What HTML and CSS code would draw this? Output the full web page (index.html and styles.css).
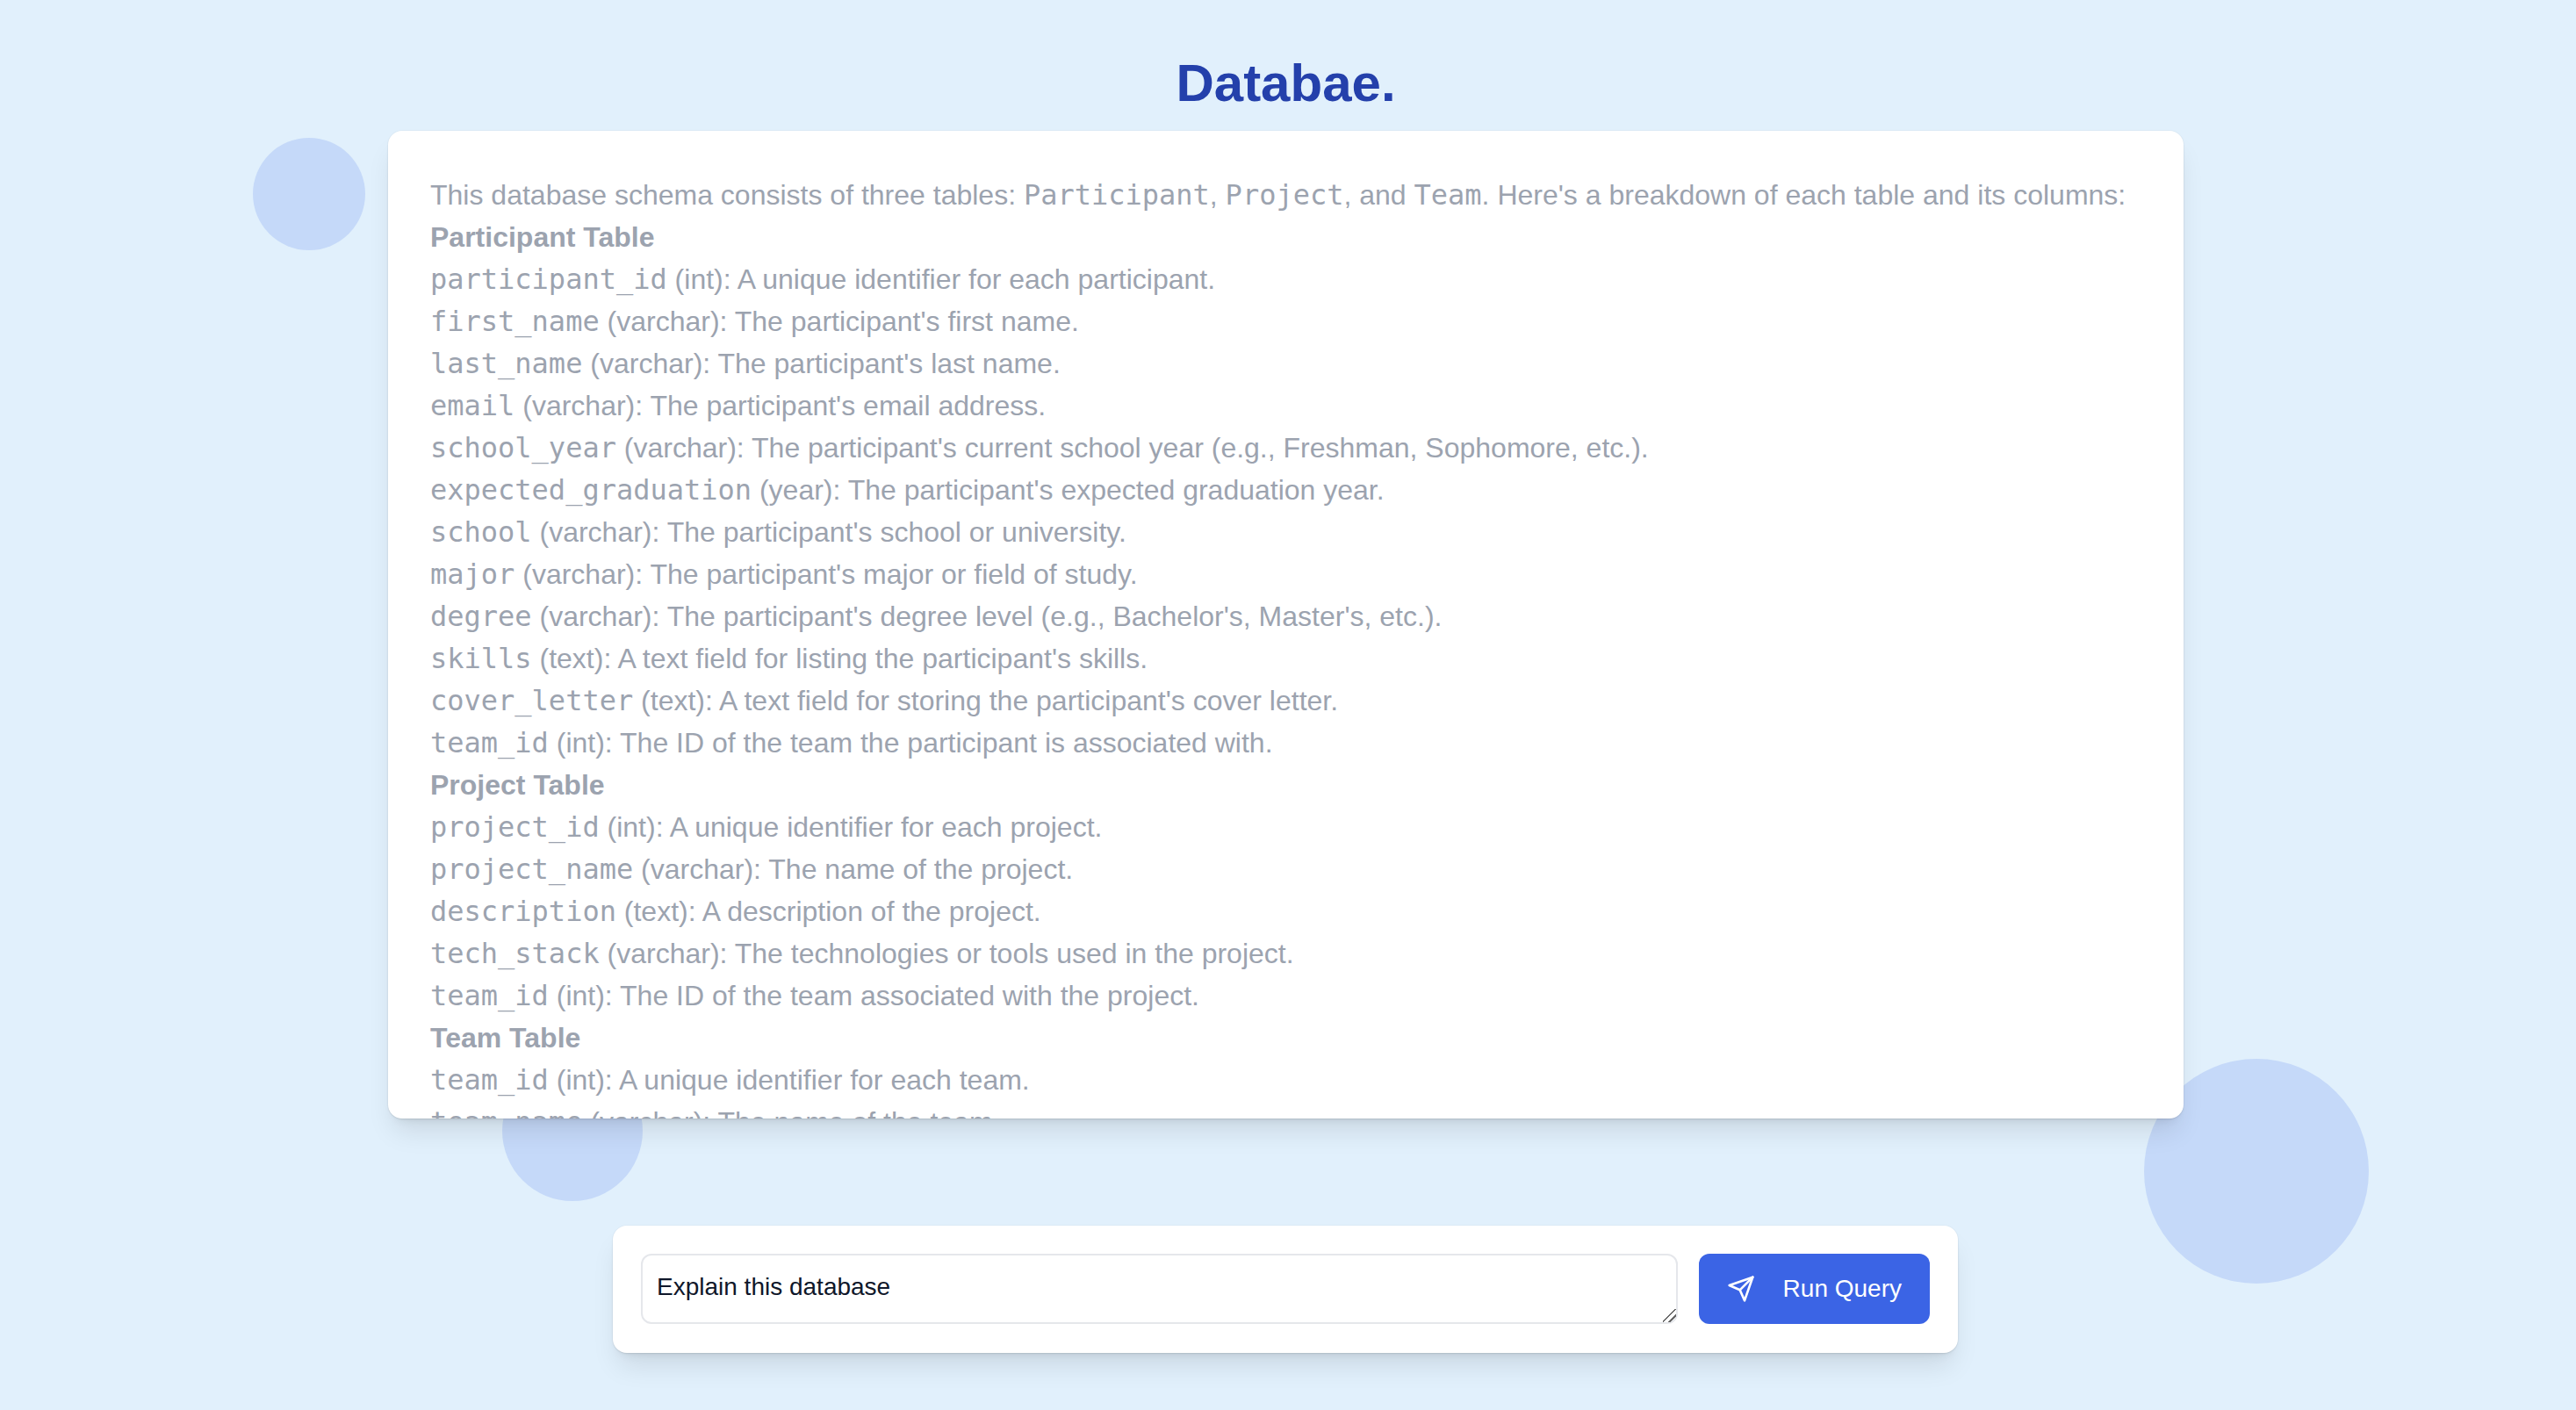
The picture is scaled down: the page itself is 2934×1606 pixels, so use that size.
FILE: index.html
```html
<!DOCTYPE html>
<html lang="en">

<head>
    <meta charset="UTF-8">
    <title>Databae.</title>
    <link rel="stylesheet" href="styles.css">
</head>

<body>
    <div class="circle circle-one"></div>
    <div class="circle circle-two"></div>
    <div class="circle circle-three"></div>

    <h1 class="title">Databae.</h1>

    <div class="answer">
        <p>This database schema consists of three tables: <code>Participant</code>, <code>Project</code>, and <code>Team</code>. Here's a breakdown of each table and its columns:</p>
        <p><strong>Participant Table</strong></p>
        <p><code>participant_id</code> (int): A unique identifier for each participant.</p>
        <p><code>first_name</code> (varchar): The participant's first name.</p>
        <p><code>last_name</code> (varchar): The participant's last name.</p>
        <p><code>email</code> (varchar): The participant's email address.</p>
        <p><code>school_year</code> (varchar): The participant's current school year (e.g., Freshman, Sophomore, etc.).</p>
        <p><code>expected_graduation</code> (year): The participant's expected graduation year.</p>
        <p><code>school</code> (varchar): The participant's school or university.</p>
        <p><code>major</code> (varchar): The participant's major or field of study.</p>
        <p><code>degree</code> (varchar): The participant's degree level (e.g., Bachelor's, Master's, etc.).</p>
        <p><code>skills</code> (text): A text field for listing the participant's skills.</p>
        <p><code>cover_letter</code> (text): A text field for storing the participant's cover letter.</p>
        <p><code>team_id</code> (int): The ID of the team the participant is associated with.</p>
        <p><strong>Project Table</strong></p>
        <p><code>project_id</code> (int): A unique identifier for each project.</p>
        <p><code>project_name</code> (varchar): The name of the project.</p>
        <p><code>description</code> (text): A description of the project.</p>
        <p><code>tech_stack</code> (varchar): The technologies or tools used in the project.</p>
        <p><code>team_id</code> (int): The ID of the team associated with the project.</p>
        <p><strong>Team Table</strong></p>
        <p><code>team_id</code> (int): A unique identifier for each team.</p>
        <p><code>team_name</code> (varchar): The name of the team.</p>
    </div>

    <form class="query-bar">
        <textarea class="query-input">Explain this database</textarea>
        <button class="run-button" type="button">
            <svg class="run-icon" viewBox="0 0 24 24" fill="none" stroke="currentColor" stroke-width="2"
                stroke-linecap="round" stroke-linejoin="round">
                <line x1="22" y1="2" x2="11" y2="13"></line>
                <polygon points="22 2 15 22 11 13 2 9 22 2"></polygon>
            </svg>
            Run Query
        </button>
    </form>
</body>

</html>
```

FILE: styles.css
```css
html,
body {
    height: 100%;
}

body {
    margin: 0;
    padding: 59px 5px 0 0;
    box-sizing: border-box;
    position: relative;
    overflow: hidden;
    display: flex;
    flex-direction: column;
    align-items: center;
    background: #e1f0fc;
    font-family: "Liberation Sans", Arial, sans-serif;
}

.circle {
    position: absolute;
    border-radius: 50%;
    background: #c5d9f9;
}

.circle-one {
    left: 288px;
    top: 157px;
    width: 128px;
    height: 128px;
}

.circle-two {
    left: 572px;
    top: 1208px;
    width: 160px;
    height: 160px;
}

.circle-three {
    left: 2442px;
    top: 1206px;
    width: 256px;
    height: 256px;
}

.title {
    position: relative;
    margin: 0 0 18px;
    font-size: 60px;
    line-height: 72px;
    font-weight: 700;
    color: #2440ab;
}

.answer {
    position: relative;
    width: 2045px;
    height: 1125px;
    box-sizing: border-box;
    padding: 49px 48px 0;
    overflow: hidden;
    background: white;
    border-radius: 16px;
    box-shadow: 0 20px 30px -6px rgba(0, 0, 0, 0.1), 0 8px 12px -8px rgba(0, 0, 0, 0.1), 0 1px 2px rgba(0, 0, 0, 0.08), 0 0 0 1px rgba(0, 0, 0, 0.02);
    font-size: 32px;
    line-height: 48px;
    color: #9ca3af;
}

.answer p {
    margin: 0;
}

.answer code {
    font-family: "DejaVu Sans Mono", "Liberation Mono", monospace;
    font-size: 32px;
}

.query-bar {
    position: relative;
    display: flex;
    align-items: flex-start;
    gap: 24px;
    width: 1532px;
    height: 145px;
    box-sizing: border-box;
    margin: 122px 1px 0 0;
    padding: 32px;
    background: white;
    border-radius: 16px;
    box-shadow: 0 20px 30px -6px rgba(0, 0, 0, 0.1), 0 8px 12px -8px rgba(0, 0, 0, 0.1), 0 1px 2px rgba(0, 0, 0, 0.08), 0 0 0 1px rgba(0, 0, 0, 0.02);
}

.query-input {
    flex: 1;
    height: 80px;
    box-sizing: border-box;
    padding: 16px;
    border: 2px solid #e5e7eb;
    border-radius: 12px;
    outline: none;
    font-family: "Liberation Sans", Arial, sans-serif;
    font-size: 28px;
    line-height: 40px;
    color: #0f172a;
}

.query-input::-webkit-resizer {
    background: linear-gradient(135deg, transparent 44%, #666 44%, #666 52%, transparent 52%, transparent 70%, #666 70%, #666 78%, transparent 78%);
}

.run-button {
    display: flex;
    align-items: center;
    gap: 32px;
    height: 80px;
    padding: 0 32px;
    border: none;
    border-radius: 12px;
    background: #3b64e5;
    color: white;
    font-family: "Liberation Sans", Arial, sans-serif;
    font-size: 28px;
    cursor: pointer;
}

.run-icon {
    width: 32px;
    height: 32px;
}
```
